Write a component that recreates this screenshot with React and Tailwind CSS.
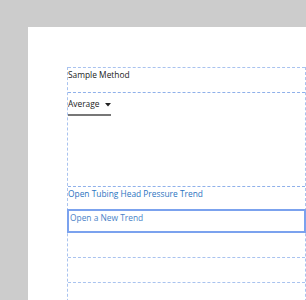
export default function App() {
  const font = { fontFamily: '"Open Sans", "Noto Sans", sans-serif' };
  return (
    <div className="w-[306px] h-[300px] overflow-hidden bg-[#cccccc] pt-[27px] pl-[28px]" style={font}>
      <div className="bg-white h-[400px] w-[300px] pt-[40px] pl-[39px]">
        <div className="w-[239px] border-l border-r border-dashed border-[#a9c3ef] text-[8.4px] leading-[12px]">
          <div className="h-[25px] border-t border-dashed border-[#a9c3ef] pt-[1px] text-[#222]">Sample Method</div>
          <div className="h-[94px] border-t border-dashed border-[#8fb0ea] pt-[5px]">
            <div className="flex items-center text-[#222]">
              <span>Average</span>
              <svg width="6" height="4" viewBox="0 0 6 4" className="ml-[5px] mt-[1px]"><path d="M0 0h6L3 3.5z" fill="#222" /></svg>
            </div>
            <div className="mt-[4px] w-[43px] h-[2px] bg-[#777]"></div>
          </div>
          <div className="h-[23px] border-t border-dashed border-[#8fb0ea] pt-[1px] text-[#2b74c1]">Open Tubing Head Pressure Trend</div>
          <div className="h-[24px] border-2 border-[#7ba2ee] -mx-px pl-px pt-px text-[#4a83c8]">Open a New Trend</div>
          <div className="h-[24px]"></div>
          <div className="h-[25px] border-t border-dashed border-[#a9c3ef]"></div>
          <div className="h-[40px] border-t border-dashed border-[#a9c3ef]"></div>
        </div>
      </div>
    </div>
  );
}
